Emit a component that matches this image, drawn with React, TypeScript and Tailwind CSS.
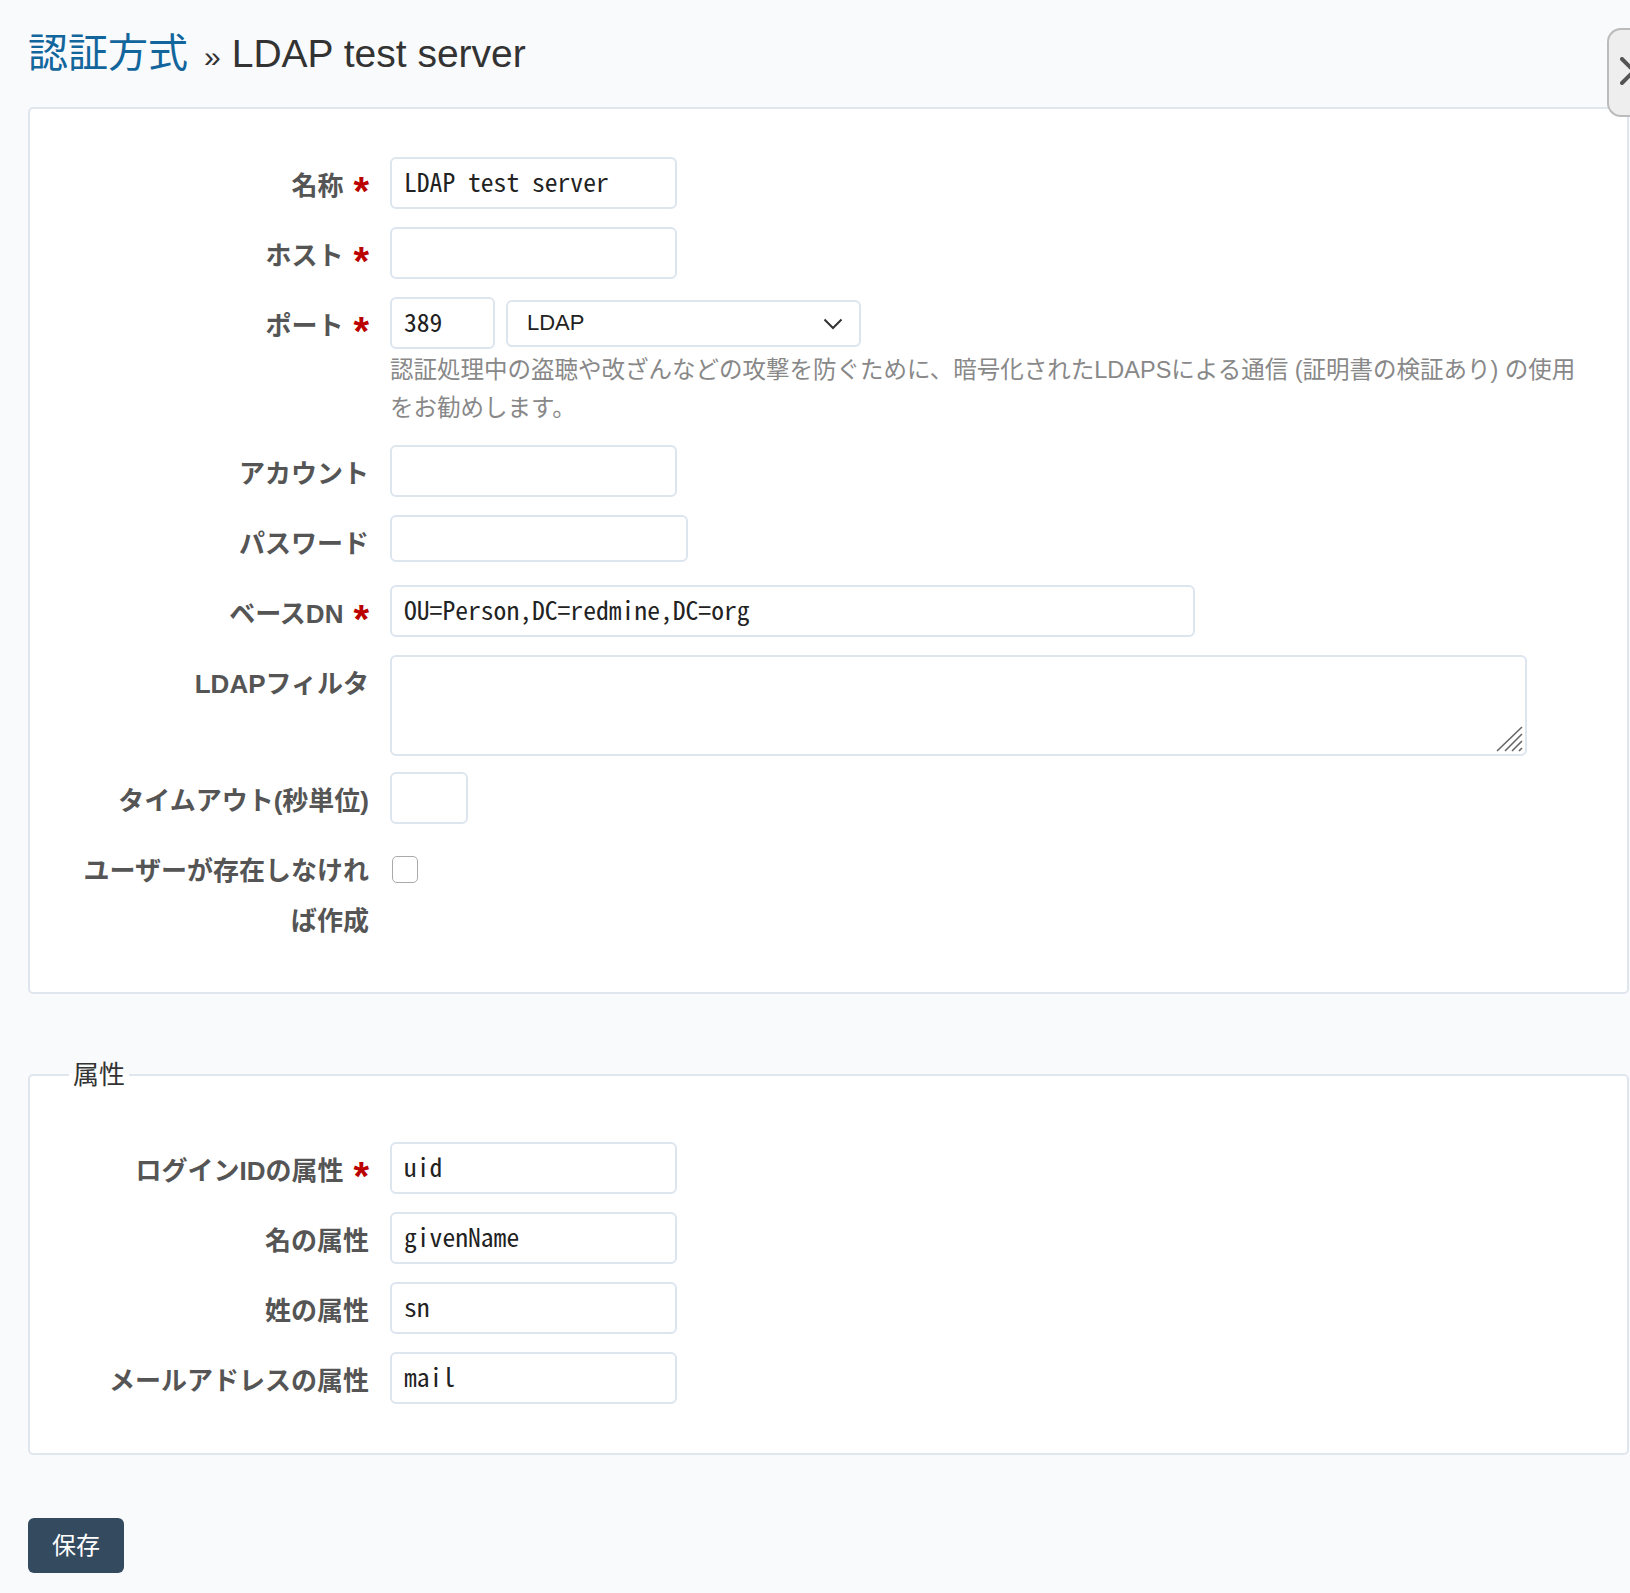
import React from "react";

const sans = "font-['Liberation_Sans','Noto_Sans_CJK_JP',sans-serif]";
const mono = "font-['Noto_Sans_Mono_CJK_JP','Liberation_Mono',monospace]";
const inputBase =
  "rounded-[6px] border-2 border-[#dde5ef] bg-white px-[12px] pb-[6px] text-[25.6px] text-[#222] outline-none " + mono;

function Row({
  label,
  required,
  children,
}: {
  label: React.ReactNode;
  required?: boolean;
  children?: React.ReactNode;
}) {
  return (
    <div className="flex items-start">
      <div className="w-[300px] shrink-0 pt-[4px] text-right text-[26px] font-bold leading-[50px] text-[#555]">
        {label}
        {required && (
          <span className="relative top-[10px] ml-[10px] font-['Liberation_Sans',sans-serif] text-[40px] leading-[0px] text-[#bb0000]">
            *
          </span>
        )}
      </div>
      <div className="ml-[21px] min-w-0 flex-1">{children}</div>
    </div>
  );
}

export default function App() {
  return (
    <div className={"relative min-h-screen overflow-hidden bg-[#f9fafc] pl-[28px] pr-[1px] " + sans}>
      {/* sidebar toggle */}
      <div className="absolute right-0 top-[28px] h-[89px] w-[23px] overflow-hidden rounded-l-[14px] border-2 border-r-0 border-[#bbb] bg-[#eee]">
        <svg className="absolute left-[11px] top-[27px]" width="28" height="28" viewBox="0 0 28 28">
          <path d="M2 2 L26 26 M2 26 L26 2" stroke="#555" strokeWidth="4" strokeLinecap="round" />
        </svg>
      </div>

      <h2 className="mb-[25px] pt-[28px] text-[40px] font-normal leading-[50px] text-[#333]">
        <a className="text-[#13669c]">認証方式</a>
        <span className="ml-[16px] mr-[11px] text-[30px]">»</span>
        <span className="text-[39px]">LDAP test server</span>
      </h2>

      <div className="rounded-[5px] border-2 border-[#dfe6ee] bg-white pb-[46px] pl-[39px] pt-[48px]">
        <div className="flex flex-col gap-[16px]">
          <Row label="名称" required>
            <input className={inputBase + " h-[52px] w-[287px]"} defaultValue="LDAP test server" />
          </Row>
          <Row label="ホスト" required>
            <input className={inputBase + " h-[52px] w-[287px]"} />
          </Row>
          <Row label="ポート" required>
            <div className="flex items-start gap-[11px]">
              <input className={inputBase + " h-[52px] w-[105px]"} defaultValue="389" />
              <div className="relative mt-[3px] h-[47px] w-[355px] rounded-[6px] border-2 border-[#dde5ef] bg-white">
                <div className="pl-[19px] text-[22px] leading-[41px] text-[#222]">LDAP</div>
                <svg className="absolute right-[16px] top-[16px]" width="20" height="12" viewBox="0 0 20 12">
                  <polyline points="1.5,1.5 10,10 18.5,1.5" fill="none" stroke="#333" strokeWidth="2" />
                </svg>
              </div>
            </div>
            <p className="mb-[2px] mt-[2px] text-[23.5px] leading-[38px] text-[#888]">
              認証処理中の盗聴や改ざんなどの攻撃を防ぐために、暗号化されたLDAPSによる通信 (証明書の検証あり) の使用
              <br />
              をお勧めします。
            </p>
          </Row>
          <Row label="アカウント">
            <input className={inputBase + " h-[52px] w-[287px]"} />
          </Row>
          <Row label="パスワード">
            <input type="password" className={inputBase + " h-[47px] w-[298px]"} />
          </Row>
          <Row label="ベースDN" required>
            <input className={inputBase + " h-[52px] w-[805px]"} defaultValue="OU=Person,DC=redmine,DC=org" />
          </Row>
          <Row label="LDAPフィルタ">
            <div className="relative w-[1137px]">
              <textarea className={inputBase + " block h-[101px] w-[1137px] resize-none"} />
              <svg className="absolute bottom-[4px] right-[4px]" width="27" height="26" viewBox="0 0 27 26">
                <path
                  d="M1 25 L26 1 M9 25 L26 8 M16 25 L26 15 M23 25 L26 22"
                  stroke="#666"
                  strokeWidth="1.6"
                  fill="none"
                />
              </svg>
            </div>
          </Row>
          <Row label="タイムアウト(秒単位)">
            <input className={inputBase + " h-[52px] w-[78px]"} />
          </Row>
          <Row label="ユーザーが存在しなければ作成">
            <div className="mt-[14px] ml-[2px] h-[27px] w-[26px] rounded-[5px] border-[1.5px] border-[#aaa] bg-white" />
          </Row>
        </div>
      </div>

      <fieldset className="mt-[66px] min-w-0 rounded-[5px] border-2 border-[#dfe6ee] bg-white pb-[47px] pl-[39px] pr-0 pt-[52px]">
        <legend className="px-[4px] text-[26px] leading-[30px] text-[#333]">属性</legend>
        <div className="flex flex-col gap-[16px]">
          <Row label="ログインIDの属性" required>
            <input className={inputBase + " h-[52px] w-[287px]"} defaultValue="uid" />
          </Row>
          <Row label="名の属性">
            <input className={inputBase + " h-[52px] w-[287px]"} defaultValue="givenName" />
          </Row>
          <Row label="姓の属性">
            <input className={inputBase + " h-[52px] w-[287px]"} defaultValue="sn" />
          </Row>
          <Row label="メールアドレスの属性">
            <input className={inputBase + " h-[52px] w-[287px]"} defaultValue="mail" />
          </Row>
        </div>
      </fieldset>

      <button className="mt-[63px] h-[55px] w-[96px] rounded-[6px] bg-[#344a5f] text-[24px] text-white">
        保存
      </button>
    </div>
  );
}
